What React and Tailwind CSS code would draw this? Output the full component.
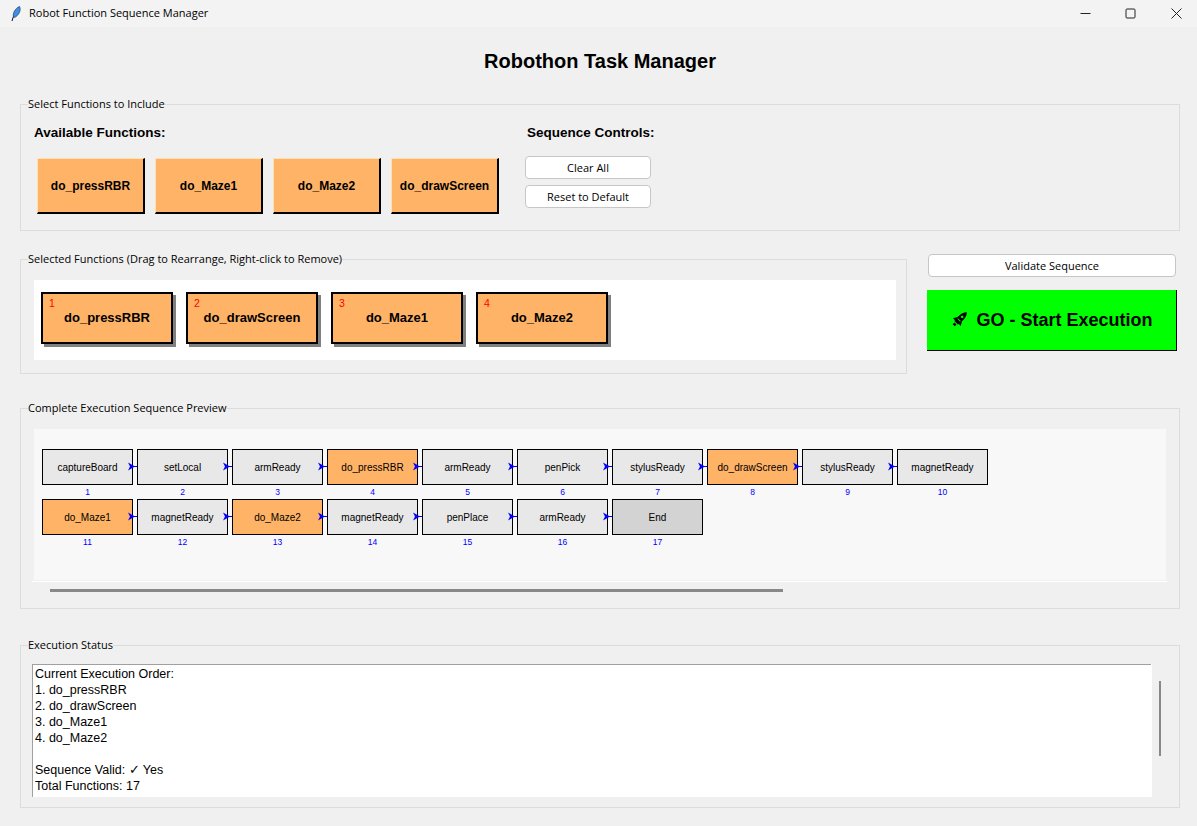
const arial = "font-['Liberation_Sans',Arial,sans-serif]";
const ui = "font-['Open_Sans','Noto_Sans',sans-serif]";

const available = ["do_pressRBR", "do_Maze1", "do_Maze2", "do_drawScreen"];
const selected = ["do_pressRBR", "do_drawScreen", "do_Maze1", "do_Maze2"];
const rows = [
  [
    ["captureBoard", 1],
    ["setLocal", 2],
    ["armReady", 3],
    ["do_pressRBR", 4, "user"],
    ["armReady", 5],
    ["penPick", 6],
    ["stylusReady", 7],
    ["do_drawScreen", 8, "user"],
    ["stylusReady", 9],
    ["magnetReady", 10],
  ],
  [
    ["do_Maze1", 11, "user"],
    ["magnetReady", 12],
    ["do_Maze2", 13, "user"],
    ["magnetReady", 14],
    ["penPlace", 15],
    ["armReady", 16],
    ["End", 17, "end"],
  ],
];
const statusLines = [
  "Current Execution Order:",
  "1. do_pressRBR",
  "2. do_drawScreen",
  "3. do_Maze1",
  "4. do_Maze2",
  "",
  "Sequence Valid: ✓ Yes",
  "Total Functions: 17",
];

function Group({ title, className, children }) {
  return (
    <section className={`relative border border-[#dcdcdc] ${className}`}>
      <span className={`absolute left-[7px] top-[-9px] bg-[#f0f0f0] text-[11px] leading-[16px] text-black ${ui}`}>
        {title}
      </span>
      {children}
    </section>
  );
}

function TkButton({ label, className }) {
  return (
    <button className={`block h-[23px] rounded-[4px] border border-[#c6c6c6] bg-white text-[11px] leading-none text-black ${ui} ${className}`}>
      {label}
    </button>
  );
}

function Feather() {
  return (
    <svg width="12" height="16" viewBox="0 0 12 16">
      <path d="M2 15 C3 11 5 6 9 1" fill="none" stroke="#111" strokeWidth="1" />
      <path d="M9.5 0.5 C11 3 10 8 5.5 11 L3.5 11.5 C2.5 7 5 2.5 9.5 0.5 Z" fill="#3f8fe0" stroke="#1b3f73" strokeWidth="0.7" />
    </svg>
  );
}

function Rocket() {
  return (
    <svg width="18" height="16" viewBox="0 0 18 16">
      <g transform="rotate(45 9 8)">
        <path d="M9 -3 C12.5 0 12.5 6 11.5 12 L6.5 12 C5.5 6 5.5 0 9 -3 Z" fill="#000" />
        <path d="M6.5 6 L3.5 11 L6.5 11 Z M11.5 6 L14.5 11 L11.5 11 Z" fill="#000" />
        <circle cx="9" cy="3.5" r="1.3" fill="#00ff00" />
        <rect x="7" y="7.5" width="4" height="0.9" fill="#00ff00" />
        <rect x="7.5" y="13" width="3" height="2.5" fill="#000" />
      </g>
    </svg>
  );
}

function Arrow() {
  return (
    <svg className="absolute left-[86px] top-[13px]" width="10" height="9" viewBox="0 0 10 9">
      <path d="M0 0.5 L7 4.5 L0 8.5 L2 4.5 Z" fill="#0000ff" />
      <rect x="2" y="4" width="8" height="1" fill="#0000ff" />
    </svg>
  );
}

function SeqNode({ label, num, kind, last }) {
  const bg = kind === "user" ? "bg-[#ffb366]" : kind === "end" ? "bg-[#d3d3d3]" : "bg-[#e8e8e8]";
  return (
    <div className="relative w-[91px]">
      <div className={`flex h-[36px] items-center justify-center border border-black text-[10px] text-black ${arial} ${bg}`}>
        {label}
      </div>
      <div className={`h-[14px] text-center text-[8.5px] leading-[14px] text-[#0000ff] ${arial}`}>{num}</div>
      {!last && <Arrow />}
    </div>
  );
}

export default function App() {
  return (
    <div className="h-[826px] w-[1197px] overflow-hidden bg-[#f0f0f0]">
      {/* barra de titulo */}
      <div className="flex h-[27px] items-center bg-[#f3f3f3] pl-[10px]">
        <Feather />
        <span className={`ml-[7px] text-[11px] text-black ${ui}`}>Robot Function Sequence Manager</span>
        <div className="ml-auto flex h-full items-center">
          <svg className="mr-[34px]" width="11" height="11" viewBox="0 0 11 11">
            <rect x="0.5" y="5" width="10" height="1" fill="#222" />
          </svg>
          <svg className="mr-[35px]" width="11" height="11" viewBox="0 0 11 11">
            <rect x="1" y="1" width="9" height="9" rx="1" fill="none" stroke="#222" />
          </svg>
          <svg className="mr-[15px]" width="11" height="11" viewBox="0 0 11 11">
            <path d="M0.5 0.5 L10.5 10.5 M10.5 0.5 L0.5 10.5" stroke="#222" />
          </svg>
        </div>
      </div>

      <div className="px-[20px]">
        <h1 className={`flex h-[77px] items-center justify-center pb-[9px] pl-[3px] text-[20px] font-bold text-black ${arial}`}>
          Robothon Task Manager
        </h1>

        <Group title="Select Functions to Include" className="h-[127px] w-[1160px]">
          <div className="flex">
            <div className="w-[506px] pl-[13px] pt-[20px]">
              <div className={`text-[13.5px] font-bold leading-[16px] text-black ${arial}`}>Available Functions:</div>
              <div className="ml-[3px] mt-[17px] flex gap-[10px]">
                {available.map((name) => (
                  <button
                    key={name}
                    className={`h-[56px] w-[108px] border-t border-l border-r-2 border-b-2 border-t-[#ffe0b0] border-l-[#ffe0b0] border-r-black border-b-black bg-[#ffb366] text-[12px] font-bold text-black ${arial}`}
                  >
                    {name}
                  </button>
                ))}
              </div>
            </div>
            <div className="pt-[20px]">
              <div className={`text-[13.5px] font-bold leading-[16px] text-black ${arial}`}>Sequence Controls:</div>
              <TkButton label="Clear All" className="-ml-[2px] mt-[15px] w-[126px]" />
              <TkButton label="Reset to Default" className="-ml-[2px] mt-[6px] w-[126px]" />
            </div>
          </div>
        </Group>

        <div className="mt-[28px] flex items-start">
          <Group title="Selected Functions (Drag to Rearrange, Right-click to Remove)" className="h-[115px] w-[890px]">
            <div className="ml-[13px] mt-[20px] flex h-[80px] w-[862px] gap-[13px] bg-white pl-[7px] pt-[12px]">
              {selected.map((name, i) => (
                <div
                  key={name}
                  className="relative flex h-[52px] w-[132px] items-center justify-center border-2 border-black bg-[#ffb366] shadow-[3px_3px_0_#808080]"
                >
                  <span className={`absolute left-[6px] top-[3px] text-[10.5px] leading-[12px] text-[#ff0000] ${arial}`}>{i + 1}</span>
                  <span className={`text-[13px] font-bold text-black ${arial}`}>{name}</span>
                </div>
              ))}
            </div>
          </Group>
          <div className="ml-[20px] w-[250px] -mt-[5px]">
            <TkButton label="Validate Sequence" className="mx-px w-[248px]" />
            <button className={`mt-[13px] flex h-[61px] w-[250px] items-center justify-center border-r border-b border-black bg-[#00ff00] text-[18px] font-bold text-black ${arial}`}>
              <Rocket />
              <span className="ml-[8px]">GO - Start Execution</span>
            </button>
          </div>
        </div>

        <Group title="Complete Execution Sequence Preview" className="mt-[34px] h-[201px] w-[1160px]">
          <div className="ml-[13px] mt-[20px] h-[151px] w-[1132px] bg-[#f8f8f8] pl-[8px] pt-[20px]">
            {rows.map((row, r) => (
              <div key={r} className="flex gap-[4px]">
                {row.map(([label, num, kind], i) => (
                  <SeqNode key={num} label={label} num={num} kind={kind} last={i === row.length - 1} />
                ))}
              </div>
            ))}
          </div>
          <div className="ml-[11px] mt-px h-px w-[1135px] bg-white" />
          <div className="ml-[29px] mt-[7px] h-[3px] w-[733px] bg-[#888888]" />
        </Group>

        <Group title="Execution Status" className="mt-[36px] h-[163px] w-[1160px]">
          <div className="flex">
            <div className="ml-[11px] mt-[18px] h-[133px] w-[1120px] border-l border-[#a0a0a0] bg-white">
              <div className="h-px w-[1118px] bg-[#a0a0a0]" />
              <div className={`pl-[2px] pt-px text-[12.5px] leading-[16px] text-black ${arial}`}>
                {statusLines.map((line, i) => (
                  <div key={i} className="h-[16px] whitespace-pre">
                    {line}
                  </div>
                ))}
              </div>
            </div>
            <div className="ml-[7px] mt-[35px] h-[75px] w-[2px] bg-[#888888]" />
          </div>
        </Group>
      </div>
    </div>
  );
}
